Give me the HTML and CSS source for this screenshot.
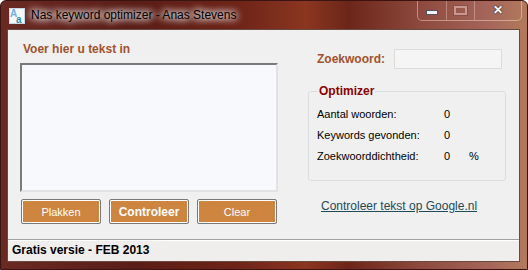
FILE: index.html
```html
<!DOCTYPE html>
<html lang="nl">
<head>
  <meta charset="UTF-8">
  <title>Nas keyword optimizer - Anas Stevens</title>
  <link rel="stylesheet" href="styles.css">
</head>
<body>
  <div class="window">
    <div class="titlebar">
      <svg class="app-icon" width="16" height="16" viewBox="0 0 16 16">
        <rect x="0.5" y="0.5" width="15" height="15" fill="#f4f8fb" stroke="#c9d6df"/>
        <text x="1" y="9" font-family="Liberation Sans, sans-serif" font-size="10" font-weight="bold" fill="#6fb0e0">A</text>
        <text x="7" y="15" font-family="Liberation Sans, sans-serif" font-size="10" font-weight="bold" fill="#2f8fa8">a</text>
      </svg>
      <span class="title">Nas keyword optimizer - Anas Stevens</span>
      <div class="caption-buttons">
        <div class="cap-btn cap-min"><span></span></div>
        <div class="cap-btn cap-max"><span></span></div>
        <div class="cap-btn cap-close">&#x2715;</div>
      </div>
    </div>

    <div class="client">
      <div class="main">
        <div class="left">
          <div class="heading">Voer hier u tekst in</div>
          <div class="textbox"></div>
          <div class="buttons">
            <button class="btn">Plakken</button>
            <button class="btn btn-bold">Controleer</button>
            <button class="btn">Clear</button>
          </div>
        </div>

        <div class="right">
          <div class="keyword-row">
            <span class="heading">Zoekwoord:</span>
            <div class="keyword-input"></div>
          </div>

          <fieldset class="group">
            <legend>Optimizer</legend>
            <div class="stat"><span class="stat-label">Aantal woorden:</span><span class="stat-value">0</span></div>
            <div class="stat"><span class="stat-label">Keywords gevonden:</span><span class="stat-value">0</span></div>
            <div class="stat"><span class="stat-label">Zoekwoorddichtheid:</span><span class="stat-value">0</span><span class="stat-unit">%</span></div>
          </fieldset>

          <a class="google-link" href="#">Controleer tekst op Google.nl</a>
        </div>
      </div>

      <div class="status">Gratis versie - FEB 2013</div>
    </div>
  </div>
</body>
</html>
```

FILE: styles.css
```css
body {
  margin: 0;
  padding: 0;
  font-family: 'Liberation Sans', Arial, sans-serif;
}
.window {
  width: 528px;
  height: 270px;
  box-sizing: border-box;
  border: 1px solid #3a1410;
  border-radius: 6px 6px 0 0;
  background: linear-gradient(90deg, #6a2a24 0%, #5a1d17 25%, #6e2418 45%, #8a3620 58%, #6c2619 66%, #8e4a3e 80%, #a4645a 92%, #b27a5c 100%);
  display: flex;
  flex-direction: column;
  overflow: hidden;
}
.titlebar {
  height: 28px;
  display: flex;
  align-items: flex-start;
  position: relative;
}
.app-icon {
  margin: 7px 0 0 8px;
}
.title {
  margin: 7px 0 0 6px;
  font-size: 12px;
  color: #000;
  text-shadow: 0 0 6px #fff, 0 0 8px #fff, 0 0 10px rgba(255, 255, 255, 0.8);
}
.caption-buttons {
  position: absolute;
  top: -1px;
  right: 5px;
  display: flex;
  height: 20px;
  border: 1px solid rgba(255, 230, 220, 0.45);
  border-top: none;
  border-radius: 0 0 5px 5px;
  overflow: hidden;
}
.cap-btn {
  display: flex;
  justify-content: center;
  align-items: center;
  height: 20px;
  border-left: 1px solid rgba(255, 230, 220, 0.35);
  color: #fff;
}
.cap-btn:first-child {
  border-left: none;
}
.cap-min {
  width: 28px;
}
.cap-min span {
  width: 10px;
  height: 3px;
  margin-top: 4px;
  background: #f4f4fa;
  border: 1px solid #505060;
}
.cap-max {
  width: 27px;
}
.cap-max span {
  width: 9px;
  height: 5px;
  border: 2px solid #c89890;
  box-shadow: 0 0 0 1px #8a5048;
}
.cap-close {
  width: 46px;
  font-size: 12px;
  font-weight: bold;
  text-shadow: 0 0 1px #333, 0 0 2px #333;
}
.client {
  flex: 1;
  margin: 1px 7px 7px 6px;
  background-color: #f0f0f0;
  border: 1px solid #6a4a40;
  display: flex;
  flex-direction: column;
}
.main {
  height: 209px;
  box-sizing: border-box;
  display: flex;
  padding: 10px 0 0 12px;
}
.heading {
  font-size: 12px;
  font-weight: bold;
  color: #a0522d;
}
.left {
  width: 258px;
  display: flex;
  flex-direction: column;
}
.left .heading {
  margin: 2px 0 7px 3px;
  height: 14px;
}
.textbox {
  height: 125px;
  background-color: #f7f9fd;
  border-top: 2px solid #7a7a7a;
  border-left: 2px solid #7a7a7a;
  border-right: 2px solid #e3e3e3;
  border-bottom: 2px solid #e3e3e3;
}
.buttons {
  display: flex;
  gap: 8px;
  margin-top: 7px;
  padding-left: 1px;
}
.btn {
  width: 80px;
  height: 25px;
  background-color: #cd853f;
  color: #fff;
  border: 1px solid #7a7a7a;
  box-shadow: inset 0 0 0 1px #fff;
  border-radius: 2px;
  font-family: 'Liberation Sans', Arial, sans-serif;
  font-size: 11px;
  padding: 0;
}
.btn-bold {
  font-weight: bold;
  font-size: 12px;
}
.right {
  width: 198px;
  margin-left: 30px;
  display: flex;
  flex-direction: column;
}
.keyword-row {
  display: flex;
  align-items: center;
  padding-left: 9px;
  margin-top: 9px;
}
.keyword-input {
  width: 106px;
  height: 18px;
  margin-left: 9px;
  background-color: #f5f5f5;
  border: 1px solid #dcdcdc;
}
.group {
  margin: 15px 0 0 0;
  padding: 5px 0 0 8px;
  height: 90px;
  border: 1px solid #d8dde2;
  border-radius: 3px;
}
.group legend {
  margin-left: 1px;
  padding: 0 1px;
  font-size: 12px;
  font-weight: bold;
  color: #8b0000;
}
.stat {
  display: flex;
  height: 21px;
  align-items: center;
  font-size: 11px;
  color: #000;
}
.stat-label {
  width: 127px;
}
.stat-value {
  width: 25px;
}
.google-link {
  margin: 18px 0 0 13px;
  font-size: 12px;
  color: #1f4a5a;
}
.status {
  height: 21px;
  border-top: 1px solid #a0a0a0;
  box-shadow: inset 0 1px 0 #fff;
  background-color: #f0eded;
  padding-left: 4px;
  font-size: 12px;
  font-weight: bold;
  line-height: 21px;
  color: #000;
}
```
